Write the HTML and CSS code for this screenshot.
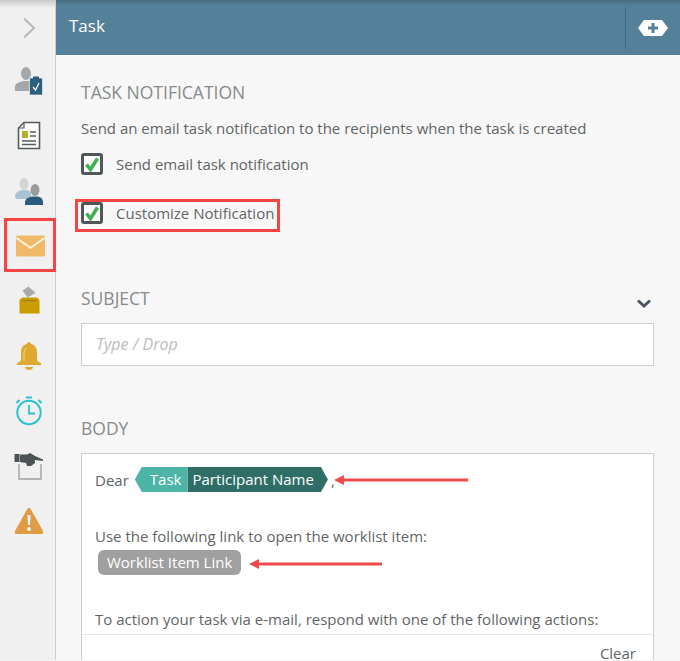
FILE: index.html
```html
<!DOCTYPE html>
<html lang="en">
<head>
<meta charset="utf-8">
<title>Task</title>
<link rel="stylesheet" href="styles.css">
</head>
<body>
<div class="app">
  <nav class="rail">
    <div class="rail-top">
      <svg width="14" height="22" viewBox="0 0 14 22"><path d="M2 1.500 12 11 2 20.500" fill="none" stroke="#b5b8b8" stroke-width="2"/></svg>
    </div>
    <div class="rail-item">
      <svg width="30" height="30" viewBox="0 0 30 30"><ellipse cx="12" cy="7.500" rx="5" ry="6.500" fill="#a5a8a8"/><path d="M1 25v-4c0-4 5-5 8-6h6l3 1v9z" fill="#a5a8a8"/><rect x="15.500" y="12" width="13" height="17" rx="1" fill="#2c5f80" stroke="#fff" stroke-width=".6"/><rect x="19" y="10.500" width="6" height="3" fill="#2c5f80"/><path d="m19 21 2.500 3 3.500-7" fill="none" stroke="#fff" stroke-width="1.300"/></svg>
    </div>
    <div class="rail-item">
      <svg width="24" height="30" viewBox="0 0 24 30"><path d="M7 1.500h15.500v26H1.500V7z" fill="#fff" stroke="#555b5b" stroke-width="1.600"/><path d="M1.500 7H7V1.500" fill="none" stroke="#555b5b" stroke-width="1.200"/><rect x="5" y="10" width="6" height="7" fill="#b3b12c"/><path d="M13 11h6M13 15h6M5 20h14M5 23.500h14" stroke="#555b5b" stroke-width="1.600"/></svg>
    </div>
    <div class="rail-item">
      <svg width="30" height="30" viewBox="0 0 30 30"><ellipse cx="10" cy="8" rx="4.500" ry="6" fill="#d3d5d5"/><path d="M1 21c0-5 4-6 7-7h5l4 2v7H2.500z" fill="#a9c4d6"/><ellipse cx="21" cy="14" rx="4.500" ry="6" fill="#999c9c"/><path d="M11 29v-3c0-3 4-5 7-5.500h6c3 .5 5 2.500 5 5.500v3z" fill="#2c5a7c"/></svg>
    </div>
    <div class="rail-item rail-mail">
      <svg width="29" height="22" viewBox="0 0 29 22"><rect x="0" y="0.500" width="29" height="21" rx="1.500" fill="#efb968"/><path d="M.5 3 14.500 13 28.500 3" fill="none" stroke="#fbf6ea" stroke-width="1.800"/></svg>
    </div>
    <div class="rail-item">
      <svg width="24" height="30" viewBox="0 0 24 30"><path d="M11.500.5 18.500 7l-8 4.500-5-7z" fill="#a9abab"/><path d="M2.500 14 5 11.500h15l2.500 2.500v13.500h-20z" fill="#cb9c00"/><path d="M6 14.500h13" stroke="#a88200" stroke-width="1.500"/></svg>
    </div>
    <div class="rail-item">
      <svg width="26" height="30" viewBox="0 0 26 30"><path d="M13 1c1 0 2 1 2 2 5 1 6 5 6 9v6c0 2 1 3 4 4v2H1v-2c3-1 4-2 4-4v-6c0-4 1-8 6-9 0-1 1-2 2-2z" fill="#dfa92f"/><path d="M8 20v-7c0-3 1-5 3-6.500" fill="none" stroke="#f3d68c" stroke-width="1"/><path d="M9 26h8c0 2-2 3-4 3s-4-1-4-3z" fill="#dfa92f"/></svg>
    </div>
    <div class="rail-item">
      <svg width="28" height="30" viewBox="0 0 28 30"><circle cx="14" cy="16.500" r="11.700" fill="none" stroke="#2bc1d3" stroke-width="2"/><path d="M14 9v8.500h6" fill="none" stroke="#2bc1d3" stroke-width="1.800"/><path d="M11 1.500h6M1.500 7l3-3M26.500 7l-3-3" stroke="#2bc1d3" stroke-width="2"/></svg>
    </div>
    <div class="rail-item">
      <svg width="30" height="30" viewBox="0 0 30 30"><path d="M5 13v15h22V13" fill="none" stroke="#b1b4b4" stroke-width="1.800"/><rect x="0.500" y="3" width="5" height="8" fill="#4c5354"/><path d="M6 3.500h7l3-1.500 5 3 8 3.500v1.500l-8-1v3l-4 3h-4l-1-3-6-1z" fill="#4c5354"/></svg>
    </div>
    <div class="rail-item">
      <svg width="30" height="28" viewBox="0 0 30 28"><path d="M15 1c1 0 1.500.5 2 1.500L29 24c.7 1.500 0 3-1.500 3h-25C1 27 .3 25.500 1 24L13 2.500C13.500 1.500 14 1 15 1z" fill="#e29a45"/><path d="M13.500 8h3l-.5 10h-2z" fill="#fff"/><circle cx="15" cy="22" r="1.900" fill="#fff"/></svg>
    </div>
  </nav>
  <div class="panel">
    <header class="bar">
      <span class="bar-title">Task</span>
      <div class="bar-action">
        <svg width="30" height="16" viewBox="0 0 30 16"><path d="M6 0h18l6 8-6 8H6L0 8z" fill="#fff"/><path d="M15 3v10M10 8h10" stroke="#55809a" stroke-width="3"/></svg>
      </div>
    </header>
    <main class="content">
      <h2 class="heading">TASK NOTIFICATION</h2>
      <p class="desc">Send an email task notification to the recipients when the task is created</p>
      <label class="check-row">
        <span class="check"><svg width="16" height="16" viewBox="0 0 16 16"><path d="m2.500 8.500 4 5 7-11" fill="none" stroke="#3fb04f" stroke-width="3.600"/></svg></span>
        <span>Send email task notification</span>
      </label>
      <label class="check-row second">
        <span class="check"><svg width="16" height="16" viewBox="0 0 16 16"><path d="m2.500 8.500 4 5 7-11" fill="none" stroke="#3fb04f" stroke-width="3.600"/></svg></span>
        <span>Customize Notification</span>
      </label>
      <div class="heading-row subject">
        <h2 class="heading">SUBJECT</h2>
        <svg class="caret" width="16" height="11" viewBox="0 0 16 11"><path d="M2 2.500 8 8l6-5.500" fill="none" stroke="#4b5560" stroke-width="3"/></svg>
      </div>
      <div class="input">Type / Drop</div>
      <h2 class="heading body-heading">BODY</h2>
      <div class="editor">
        <div class="editor-text">
          <div class="line-dear">
            <span>Dear</span>
            <span class="token"><span class="tok-a">Task</span><span class="tok-b">Participant Name</span></span>
            <span class="comma">,</span>
          </div>
          <p class="line-use">Use the following link to open the worklist item:</p>
          <span class="pill">Worklist Item Link</span>
          <p class="line-action">To action your task via e-mail, respond with one of the following actions:</p>
        </div>
        <div class="editor-foot">Clear</div>
      </div>
    </main>
  </div>
  <div class="mark mark-rail"></div>
  <div class="mark mark-check"></div>
  <svg class="arrow arrow-one" width="134" height="10" viewBox="0 0 134 10"><path d="M0 5 10 0v3.500h124v3H10V10z" fill="#ef4b4b"/></svg>
  <svg class="arrow arrow-two" width="133" height="10" viewBox="0 0 133 10"><path d="M0 5 10 0v3.500h123v3H10V10z" fill="#ef4b4b"/></svg>
</div>
</body>
</html>
```
FILE: styles.css
```css
* { box-sizing: border-box; }
html, body { margin: 0; height: 100%; }
body { font-family: "Open Sans", "Liberation Sans", sans-serif; color: #5f6566; background: #f7f7f7; overflow: hidden; }
.app { position: relative; display: flex; width: 680px; height: 661px; overflow: hidden; }
.app::after { content: ""; position: absolute; left: 0; right: 0; bottom: 0; height: 1px; background: #f4f4f4; }
.rail { flex: none; width: 56px; height: 100%; background: #f0f0f0; border-right: 1px solid #cfcfcf; display: flex; flex-direction: column; align-items: center; }
.rail-top { height: 53px; width: 100%; flex: none; display: flex; align-items: center; justify-content: center; padding: 2px 0 0 3px; background: linear-gradient(#c9c9c9 0, #f0f0f0 8px); }
.rail-item { width: 100%; height: 55px; flex: none; display: flex; align-items: center; justify-content: center; padding-left: 2px; }
.rail-mail { padding-left: 6px; }
.panel { flex: 1; min-width: 0; display: flex; flex-direction: column; }
.bar { flex: none; height: 55px; background: linear-gradient(#47697e 0, #55809a 5px); display: flex; align-items: center; justify-content: space-between; color: #fff; padding-left: 13px; }
.bar-title { font-size: 17px; margin-bottom: 5px; }
.bar-action { height: 42px; width: 55px; border-left: 1px solid #3f6a86; display: flex; align-items: center; justify-content: center; }
.content { flex: 1; min-height: 0; padding: 25px 26px 0 25px; }
.heading { margin: 0; font-size: 17.500px; font-weight: 400; line-height: 24px; color: #868b8b; }
.desc { margin: 14px 0 0; font-size: 15px; line-height: 20px; }
.check-row { display: flex; align-items: center; gap: 13px; margin-top: 14px; height: 24px; font-size: 15px; }
.check-row.second { margin-top: 25px; }
.check { width: 22px; height: 22px; border: 3px solid #50585a; border-radius: 3px; background: #fff; display: flex; align-items: center; justify-content: center; }
.heading-row { display: flex; align-items: center; justify-content: space-between; }
.subject { margin-top: 61px; }
.caret { margin-right: 2px; margin-top: 10px; }
.input { margin-top: 13px; height: 43px; border: 1px solid #cfcfcf; background: #fff; padding-left: 14px; font-size: 16px; font-style: italic; line-height: 40px; color: #bcbcbc; }
.body-heading { margin-top: 50px; }
.editor { margin-top: 13px; height: 207px; border: 1px solid #cfcfcf; border-bottom: 0; background: #fff; display: flex; flex-direction: column; font-size: 15px; }
.editor-text { flex: 1; min-height: 0; padding: 13px 13px 0; }
.line-dear { display: flex; align-items: center; height: 25px; }
.token { display: inline-flex; height: 25px; margin-left: 6px; color: #fff; line-height: 24px; }
.tok-a { background: #4db5a8; padding: 0 6px 0 15px; clip-path: polygon(7px 0, 100% 0, 100% 100%, 7px 100%, 0 50%); }
.tok-b { background: #2e6e66; padding: 0 14px 0 5px; clip-path: polygon(0 0, calc(100% - 7px) 0, 100% 50%, calc(100% - 7px) 100%, 0 100%); }
.comma { margin-left: 3px; }
.line-use { margin: 34px 0 0; line-height: 20px; }
.pill { display: inline-block; margin: 4px 0 0 3px; height: 25px; line-height: 24px; padding: 0 9px; border-radius: 6px; background: #a0a0a0; color: #fff; }
.line-action { margin: 34px 0 0; line-height: 20px; }
.editor-foot { flex: none; height: 26px; border-top: 1px solid #e6e6e6; text-align: right; padding: 11px 17px 0 0; line-height: 14px; }
.mark { position: absolute; border: 3px solid #f44444; }
.mark-rail { left: 4px; top: 218px; width: 52px; height: 54px; }
.mark-check { left: 75px; top: 199px; width: 205px; height: 33px; }
.arrow { position: absolute; }
.arrow-one { left: 334px; top: 475px; }
.arrow-two { left: 249px; top: 559px; }
```
